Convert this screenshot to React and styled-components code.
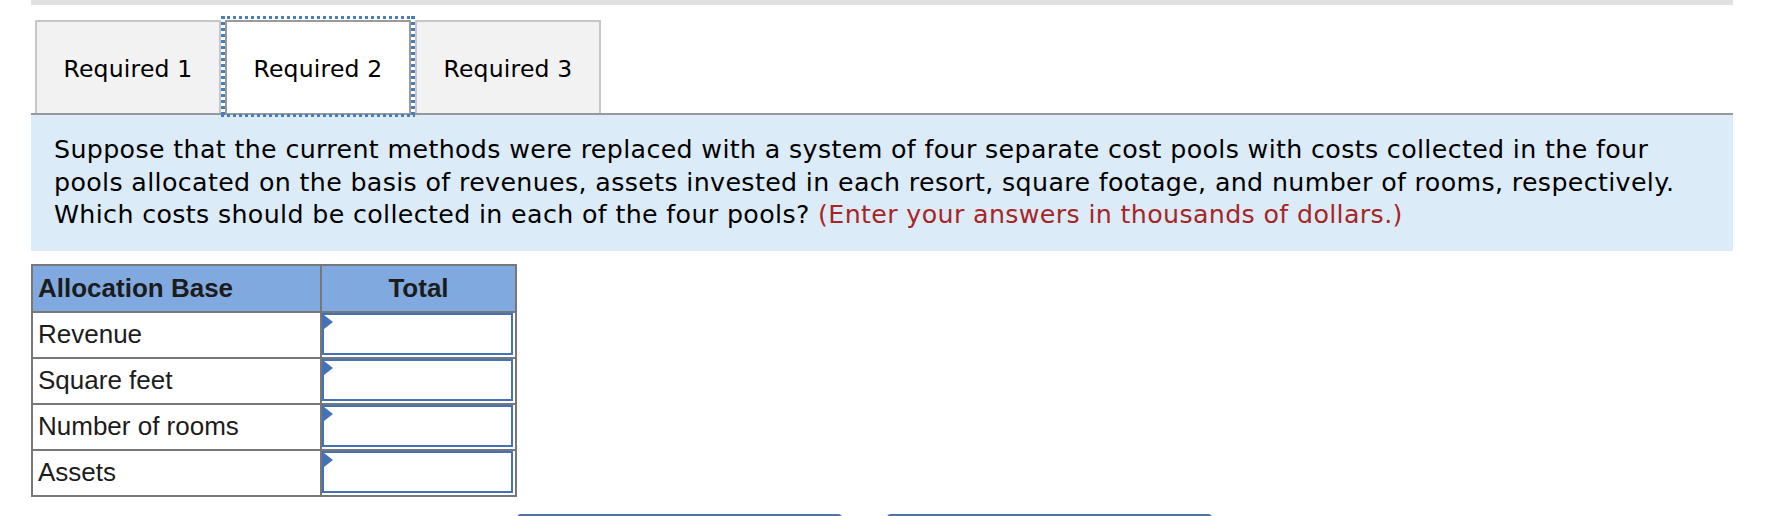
import React from 'react'
import styled, { createGlobalStyle } from 'styled-components'

const GlobalStyle = createGlobalStyle`
  html, body {
    margin: 0;
    background: #fff;
    overflow: hidden;
  }
`

const uiFont = `"DejaVu Sans", Verdana, sans-serif`
const tableFont = `"Liberation Sans", Arial, sans-serif`

const Page = styled.div`
  margin-left: 31px;
  width: 1702px;
`

const TopBar = styled.div`
  height: 5px;
  background: #e1e1e1;
`

const TabRow = styled.div`
  display: flex;
  gap: 4px;
  padding: 15px 0 0 4px;
`

const Tab = styled.div`
  position: relative;
  box-sizing: border-box;
  width: 186px;
  height: 93px;
  display: flex;
  align-items: center;
  justify-content: center;
  padding-top: 3px;
  border: 2px solid ${p => (p.$active ? '#9a9a9a' : '#c6c6c6')};
  border-bottom: none;
  background: ${p => (p.$active ? '#fff' : '#f2f2f2')};
  font-family: ${uiFont};
  font-size: 23.5px;
  letter-spacing: 0.2px;
  color: #000;

  ${p =>
    p.$active &&
    `
    &::after {
      content: '';
      position: absolute;
      top: -6px;
      left: -6px;
      right: -6px;
      bottom: -4px;
      pointer-events: none;
      background:
        repeating-linear-gradient(90deg, #4a7ebb 0 3px, transparent 3px 6px) top / 100% 3px no-repeat,
        repeating-linear-gradient(90deg, #4a7ebb 0 3px, transparent 3px 6px) bottom / 100% 3px no-repeat,
        repeating-linear-gradient(180deg, #4a7ebb 0 3px, transparent 3px 6px) left / 4px 100% no-repeat,
        repeating-linear-gradient(180deg, #4a7ebb 0 3px, transparent 3px 6px) right / 4px 100% no-repeat;
    }
  `}
`

const Panel = styled.div`
  border-top: 2px solid #999;
  background: #dcebf8;
  padding: 19px 23px 19px 23px;
  font-family: ${uiFont};
  font-size: 25.3px;
  letter-spacing: 0.35px;
  line-height: 32.6px;
  color: #000;
`

const Hint = styled.span`
  color: #a62626;
`

const Grid = styled.div`
  display: grid;
  grid-template-columns: 287px 193px;
  grid-auto-rows: 44px;
  grid-template-rows: 45px;
  gap: 2px;
  padding: 2px;
  width: 486px;
  box-sizing: border-box;
  margin-top: 13px;
  background: #777;
  font-family: ${tableFont};
  font-size: 26px;
  color: #1c1c1c;
`

const HeadCell = styled.div`
  background: #80aadf;
  font-weight: bold;
  display: flex;
  align-items: center;
  justify-content: ${p => (p.$center ? 'center' : 'flex-start')};
  padding-left: ${p => (p.$center ? '0' : '5px')};
`

const LabelCell = styled.div`
  background: #fff;
  display: flex;
  align-items: center;
  padding-left: 5px;
`

const InputCell = styled.div`
  background: #fff;
  padding: 0 2px 2px 0;
  display: flex;
  min-width: 0;
`

const InputWrap = styled.div`
  position: relative;
  flex: 1;
  min-width: 0;
  display: flex;

  &::before {
    content: '';
    position: absolute;
    top: 2px;
    left: 2px;
    border-left: 9px solid #4472b8;
    border-top: 7px solid transparent;
    border-bottom: 7px solid transparent;
  }
`

const AmountInput = styled.input`
  width: 100%;
  min-width: 0;
  box-sizing: border-box;
  margin: 0;
  padding: 0 6px;
  border: 2px solid #4472b8;
  background: #fff;
  font-family: ${tableFont};
  font-size: 20px;
  text-align: right;
  outline: none;
`

const NavRow = styled.div`
  display: flex;
  gap: 45px;
  margin: 17px 0 0 486px;
`

const NavButton = styled.button`
  width: 325px;
  height: 60px;
  border: 2px solid #4f73a8;
  border-radius: 4px;
  background: #fff;
  font-family: ${uiFont};
  font-size: 22px;
  color: #1c1c1c;
`

const rows = ['Revenue', 'Square feet', 'Number of rooms', 'Assets']

export default function App() {
  return (
    <>
      <GlobalStyle />
      <Page>
        <TopBar />
        <TabRow>
          <Tab>Required 1</Tab>
          <Tab $active>Required 2</Tab>
          <Tab>Required 3</Tab>
        </TabRow>
        <Panel>
          Suppose that the current methods were replaced with a system of four separate cost pools with costs collected in the four
          pools allocated on the basis of revenues, assets invested in each resort, square footage, and number of rooms, respectively.
          Which costs should be collected in each of the four pools?{' '}
          <Hint>(Enter your answers in thousands of dollars.)</Hint>
        </Panel>
        <Grid>
          <HeadCell>Allocation Base</HeadCell>
          <HeadCell $center>Total</HeadCell>
          {rows.map(r => (
            <React.Fragment key={r}>
              <LabelCell>{r}</LabelCell>
              <InputCell>
                <InputWrap>
                  <AmountInput type="text" aria-label={`${r} total`} />
                </InputWrap>
              </InputCell>
            </React.Fragment>
          ))}
        </Grid>
        <NavRow>
          <NavButton>‹ Required 1</NavButton>
          <NavButton>Required 3 ›</NavButton>
        </NavRow>
      </Page>
    </>
  )
}
